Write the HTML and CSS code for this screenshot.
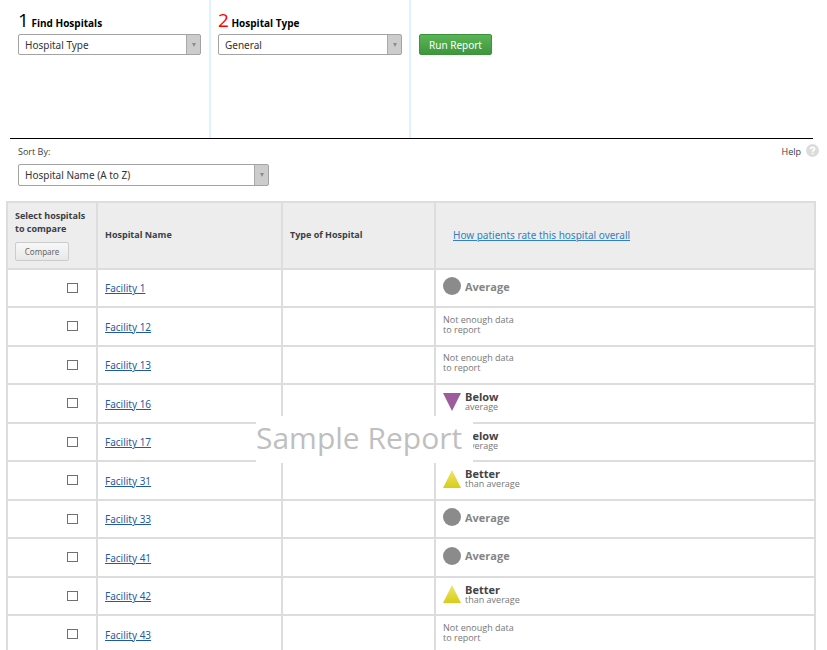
FILE: index.html
```html
<!DOCTYPE html>
<html lang="en">
<head>
<meta charset="utf-8">
<title>Hospital Report</title>
<link rel="stylesheet" href="styles.css">
</head>
<body>
<form class="filters">
  <div class="step">
    <label class="step-title" for="find"><span class="num">1</span> Find Hospitals</label>
    <div class="picker"><select id="find"><option>Hospital Type</option></select></div>
  </div>
  <div class="step">
    <label class="step-title" for="type"><span class="num current">2</span> Hospital Type</label>
    <div class="picker"><select id="type"><option>General</option></select></div>
  </div>
  <div class="run"><button class="run-button" type="button">Run Report</button></div>
</form>
<div class="toolbar">
  <div class="sort">
    <label class="sort-label" for="sort">Sort By:</label>
    <div class="picker tall"><select id="sort"><option>Hospital Name (A to Z)</option></select></div>
  </div>
  <div class="help">Help
    <svg class="help-icon" viewBox="0 0 13 13" aria-hidden="true"><circle cx="6.5" cy="6.5" r="6.5" fill="#dcdcdc"/><path d="M4.5 5.2C4.5 2.7 8.6 2.7 8.6 5C8.6 6.3 6.6 6.3 6.6 7.7M6.6 8.7V10.2" fill="none" stroke="#fff" stroke-width="1.7"/></svg>
  </div>
</div>
<main class="results">
  <table>
    <colgroup><col class="c-select"><col class="c-name"><col class="c-type"><col></colgroup>
    <thead>
      <tr>
        <th class="select-head">Select hospitals to compare<button class="compare" type="button">Compare</button></th>
        <th>Hospital Name</th>
        <th>Type of Hospital</th>
        <th class="rating-head"><a href="#">How patients rate this hospital overall</a></th>
      </tr>
    </thead>
    <tbody>
      <tr><td class="pick"><input type="checkbox" aria-label="Facility 1"></td><td><a href="#">Facility 1</a></td><td></td><td class="score"><div class="rating average"><svg class="mark" viewBox="0 0 18 18"><circle cx="9" cy="9" r="9" fill="#8b8b8b"/></svg><b>Average</b></div></td></tr>
      <tr><td class="pick"><input type="checkbox" aria-label="Facility 12"></td><td><a href="#">Facility 12</a></td><td></td><td class="score"><div class="no-data">Not enough data<br>to report</div></td></tr>
      <tr><td class="pick"><input type="checkbox" aria-label="Facility 13"></td><td><a href="#">Facility 13</a></td><td></td><td class="score"><div class="no-data">Not enough data<br>to report</div></td></tr>
      <tr><td class="pick"><input type="checkbox" aria-label="Facility 16"></td><td><a href="#">Facility 16</a></td><td></td><td class="score"><div class="rating"><svg class="mark" viewBox="0 0 18 18"><path d="M0 0H18L9 18Z" fill="#9d5c9c"/></svg><div><b>Below</b><small>average</small></div></div></td></tr>
      <tr><td class="pick"><input type="checkbox" aria-label="Facility 17"></td><td><a href="#">Facility 17</a></td><td></td><td class="score"><div class="rating"><svg class="mark" viewBox="0 0 18 18"><path d="M0 0H18L9 18Z" fill="#9d5c9c"/></svg><div><b>Below</b><small>average</small></div></div></td></tr>
      <tr><td class="pick"><input type="checkbox" aria-label="Facility 31"></td><td><a href="#">Facility 31</a></td><td></td><td class="score"><div class="rating"><svg class="mark" viewBox="0 0 18 18"><defs><linearGradient id="gold" x2="0" y2="1"><stop stop-color="#efe66c"/><stop offset="1" stop-color="#d8cc18"/></linearGradient></defs><path d="M9 0L18 18H0Z" fill="url(#gold)"/></svg><div><b>Better</b><small>than average</small></div></div></td></tr>
      <tr><td class="pick"><input type="checkbox" aria-label="Facility 33"></td><td><a href="#">Facility 33</a></td><td></td><td class="score"><div class="rating average"><svg class="mark" viewBox="0 0 18 18"><circle cx="9" cy="9" r="9" fill="#8b8b8b"/></svg><b>Average</b></div></td></tr>
      <tr><td class="pick"><input type="checkbox" aria-label="Facility 41"></td><td><a href="#">Facility 41</a></td><td></td><td class="score"><div class="rating average"><svg class="mark" viewBox="0 0 18 18"><circle cx="9" cy="9" r="9" fill="#8b8b8b"/></svg><b>Average</b></div></td></tr>
      <tr><td class="pick"><input type="checkbox" aria-label="Facility 42"></td><td><a href="#">Facility 42</a></td><td></td><td class="score"><div class="rating"><svg class="mark" viewBox="0 0 18 18"><path d="M9 0L18 18H0Z" fill="url(#gold)"/></svg><div><b>Better</b><small>than average</small></div></div></td></tr>
      <tr><td class="pick"><input type="checkbox" aria-label="Facility 43"></td><td><a href="#">Facility 43</a></td><td></td><td class="score"><div class="no-data">Not enough data<br>to report</div></td></tr>
    </tbody>
  </table>
  <div class="watermark">Sample Report</div>
</main>
</body>
</html>
```
FILE: styles.css
```css
* { box-sizing: border-box; }

html { overflow: hidden; }

body {
  margin: 0;
  height: 100vh;
  overflow: hidden;
  background: #fff;
  color: #3a4045;
  font: 10px/16px "Open Sans", "Noto Sans", sans-serif;
}

button, select, a { font-family: "Noto Sans", "Open Sans", sans-serif; }

.filters {
  display: flex;
  margin: 0 14px 0 10px;
  min-height: 139px;
  border-bottom: 1px solid #000;
}

.step {
  flex: 0 0 200px;
  padding: 8px 7px 0;
  border-right: 2px solid #def3ff;
}

.step:first-child {
  flex-basis: 201px;
  padding: 8px 8px 0;
}

.step-title {
  display: block;
  height: 26px;
  color: #000;
  font-weight: 700;
  line-height: 24px;
}

.num { font-size: 19px; font-weight: 400; }
.current { color: #f00; }

.picker {
  position: relative;
  height: 21px;
}

.tall { height: 22px; width: 251px; }

.picker select {
  width: 100%;
  height: 100%;
  padding: 0 20px 0 6px;
  appearance: none;
  background: linear-gradient(to left, #ccc 13px, #a9a9a9 13px, #a9a9a9 14px, #fff 14px);
  border: 1px solid #a3a3a3;
  border-radius: 2px;
  color: #333;
  font-size: 10px;
  line-height: 16px;
}

.picker::after {
  content: "";
  position: absolute;
  right: 5px;
  top: 9px;
  border: 2px solid transparent;
  border-top: 4px solid #8c8c8c;
  border-bottom: 0;
}

.run { padding: 34px 8px 0; }

.run-button {
  height: 21px;
  padding: 0 9px;
  background: linear-gradient(#5ab557, #3e963d);
  border: 1px solid #3d923c;
  border-radius: 2px;
  color: #fff;
  font-size: 10px;
  line-height: 16px;
}

.toolbar {
  display: flex;
  justify-content: space-between;
  align-items: flex-start;
  padding: 5px 8px 15px 18px;
}

.sort-label {
  display: block;
  height: 20px;
  font-size: 9px;
}

.help {
  display: flex;
  gap: 5px;
  font-size: 9px;
}

.help-icon { width: 13px; height: 13px; }

.results {
  position: relative;
  margin: 0 11px 0 6px;
}

table {
  width: 100%;
  table-layout: fixed;
  border-collapse: collapse;
}

.c-select { width: 90px; }
.c-name { width: 185px; }
.c-type { width: 153px; }

th, td {
  padding: 0 7px;
  border: 2px solid #ddd;
  text-align: left;
}

th {
  height: 67px;
  padding-bottom: 2px;
  background: #ededed;
  font-size: 9px;
  line-height: 13px;
}

.select-head { vertical-align: top; padding: 6px 7px 0; }

.compare {
  display: block;
  width: 54px;
  height: 19px;
  margin-top: 7px;
  padding: 0;
  background: linear-gradient(#f8f8f8, #e8e8e8);
  border: 1px solid #ccc;
  border-radius: 2px;
  color: #666;
  font-size: 8px;
}

.rating-head { padding: 0 7px 0 17px; font-size: 10px; font-weight: 400; }
.rating-head a { color: #337fc4; }

tbody tr { height: 38px; }
tbody tr:nth-child(even) { height: 39px; }

td a { color: #1f5c9e; }

.pick { padding: 0 18px 3px 0; text-align: right; }

.pick input {
  display: inline-block;
  width: 11px;
  height: 10px;
  margin: 0;
  appearance: none;
  border: 1px solid #707070;
  vertical-align: middle;
}

.score { padding-bottom: 4px; }

.rating {
  display: flex;
  align-items: center;
  gap: 4px;
}

.mark { width: 18px; height: 18px; }

.rating b {
  display: block;
  color: #444;
  font-size: 11px;
  line-height: 11px;
}

.average b { color: #858585; }

.rating small,
.no-data {
  display: block;
  color: #777;
  font-size: 9px;
  line-height: 10px;
}

.watermark {
  position: absolute;
  left: 250px;
  top: 215px;
  width: 217px;
  height: 47px;
  background: #fff;
  color: #bfbfbf;
  font: 30px/44px "Open Sans", sans-serif;
  white-space: nowrap;
}
```
